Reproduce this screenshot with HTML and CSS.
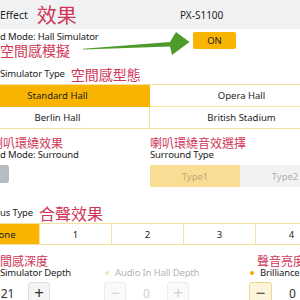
FILE: index.html
```html
<!DOCTYPE html>
<html lang="zh-Hant">
<head>
    <meta charset="UTF-8">
    <meta name="viewport" content="width=device-width, initial-scale=1.0">
    <title>Effect</title>
    <link rel="stylesheet" href="styles.css">
</head>
<body>
    <header class="topbar">
        <div class="topbar-title">
            <span>Effect</span>
            <span class="note note-xl">效果</span>
        </div>
        <span class="model">PX-S1100</span>
    </header>

    <section class="mode">
        <div class="mode-text">
            <div class="label">d Mode: Hall Simulator</div>
            <div class="note note-lg">空間感模擬</div>
        </div>
        <button class="switch switch-on">ON</button>
    </section>

    <!-- annotation arrow pointing at the ON switch -->
    <svg class="arrow" width="300" height="60" viewBox="0 0 300 60">
        <polygon points="83,48.8 170,42 176,32 189.5,42 172,55 170,46.6 83,49.6" fill="#4e9b2b"/>
    </svg>

    <section class="hall">
        <div class="heading">
            <span class="label">Simulator Type</span>
            <span class="note note-lg">空間感型態</span>
        </div>
        <div class="hall-grid">
            <button class="cell selected">Standard Hall</button>
            <button class="cell">Opera Hall</button>
            <button class="cell">Berlin Hall</button>
            <button class="cell">British Stadium</button>
        </div>
    </section>

    <section class="surround">
        <div class="surround-left">
            <div class="note note-sm surround-note">喇叭環繞效果</div>
            <div class="label">d Mode: Surround</div>
            <button class="switch switch-off"></button>
        </div>
        <div class="surround-right">
            <div class="note note-sm">喇叭環繞音效選擇</div>
            <div class="label">Surround Type</div>
            <div class="types">
                <button class="type type-active">Type1</button>
                <button class="type">Type2</button>
            </div>
        </div>
    </section>

    <section class="chorus">
        <div class="heading">
            <span class="label">us Type</span>
            <span class="note note-md">合聲效果</span>
        </div>
        <div class="chorus-row">
            <button class="chorus-cell selected">None</button>
            <button class="chorus-cell">1</button>
            <button class="chorus-cell">2</button>
            <button class="chorus-cell">3</button>
            <button class="chorus-cell">4</button>
        </div>
    </section>

    <section class="depth">
        <div class="depth-col col-sim">
            <div class="depth-note"><span class="note note-sm">空間感深度</span></div>
            <div class="label depth-label">Simulator Depth</div>
            <div class="stepper">
                <button class="step">−</button>
                <span class="value">21</span>
                <button class="step">+</button>
            </div>
        </div>
        <div class="depth-col col-audio disabled">
            <div class="depth-note"></div>
            <div class="label depth-label"><span class="dot"></span>Audio In Hall Depth</div>
            <div class="stepper">
                <button class="step">−</button>
                <span class="value">0</span>
                <button class="step">+</button>
            </div>
        </div>
        <div class="depth-col col-bright">
            <div class="depth-note"><span class="note note-sm">聲音亮度</span></div>
            <div class="label depth-label"><span class="dot"></span>Brilliance</div>
            <div class="stepper">
                <button class="step step-pressed">−</button>
                <span class="value">0</span>
                <button class="step">+</button>
            </div>
        </div>
    </section>
</body>
</html>
```

FILE: styles.css
```css
* {
    box-sizing: border-box;
}
body {
    margin: 0;
    width: 300px;
    height: 300px;
    overflow: hidden;
    position: relative;
    font-family: "Noto Sans", sans-serif;
    font-size: 9.5px;
    color: #222;
    background-color: #fff;
}
button {
    font: inherit;
    color: inherit;
    margin: 0;
    padding: 0;
    border: none;
    background: none;
}

/* red chinese annotations */
.note {
    color: #cf3658;
    font-family: "Noto Sans CJK TC", sans-serif;
    line-height: 1;
    white-space: nowrap;
}
.note-xl { font-size: 20px; }
.note-lg { font-size: 14px; }
.note-md { font-size: 16px; }
.note-sm { font-size: 12px; }

.label {
    line-height: 12px;
    letter-spacing: -0.15px;
    white-space: nowrap;
}

.topbar {
    height: 29px;
    background-color: #f1f2f4;
    display: flex;
    align-items: center;
}
.topbar-title {
    width: 180px;
    display: flex;
    align-items: center;
    gap: 9px;
    font-size: 10.5px;
}
.model {
    font-size: 10px;
}

.mode {
    display: flex;
    padding-top: 2px;
}
.mode-text {
    width: 193px;
}
.switch {
    display: block;
    width: 43px;
    height: 17px;
    border-radius: 2px;
    font-size: 9.5px;
}
.switch-on {
    margin-top: 1px;
    background-color: #f8b400;
}
.switch-off {
    margin-top: 4px;
    margin-left: -34px;
    height: 18px;
    border-radius: 3px;
    background-color: #b7bbc3;
}

.arrow {
    position: absolute;
    top: 0;
    left: 0;
    pointer-events: none;
}

.heading {
    display: flex;
    align-items: center;
    gap: 6px;
    height: 16px;
}
.hall .heading {
    margin-top: 9px;
}
.hall-grid {
    display: grid;
    grid-template-columns: repeat(2, 184px);
    margin: 2px 0 0 -34px;
    border-top: 1px solid #f3e2a2;
}
.cell {
    height: 22px;
    border-right: 1px solid #f3e2a2;
    border-bottom: 1px solid #f3e2a2;
    text-align: center;
}
.selected {
    background-color: #f8b400;
    border-color: #f8b400;
}

.surround {
    display: flex;
    margin: 8px 0 0 -33px;
}
.surround-left {
    flex-shrink: 0;
    width: 183px;
    padding-left: 33px;
}
.surround-note {
    margin-left: -9px;
}
.surround .note {
    line-height: 12px;
}
.types {
    display: flex;
    margin-top: 4px;
}
.type {
    flex-shrink: 0;
    width: 90px;
    height: 22px;
    background-color: #f2f2f2;
    color: #b0b0b0;
}
.type-active {
    background-color: #fadd94;
    color: #bca97c;
}

.chorus .heading {
    margin-top: 18px;
}
.chorus-row {
    display: flex;
    margin: 2px 0 0 -32px;
}
.chorus-cell {
    flex-shrink: 0;
    width: 72px;
    height: 22px;
    border: 1px solid #f3e2a2;
    border-left: none;
}

.depth {
    display: flex;
    margin: 10px 0 0 -35px;
}
.depth-col {
    flex-shrink: 0;
}
.col-sim { width: 139px; }
.col-audio { width: 145px; }
.col-bright { width: 145px; }
.depth-note {
    height: 12px;
    line-height: 12px;
}
.col-sim .depth-note { padding-left: 23px; }
.col-bright .depth-note { padding-left: 8px; }
.depth-label {
    display: flex;
    align-items: center;
    gap: 6px;
}
.col-sim .depth-label { padding-left: 35px; }
.dot {
    width: 4px;
    height: 4px;
    margin-left: 1px;
    border-radius: 50%;
    background-color: #f0a800;
}
.stepper {
    display: flex;
    align-items: center;
    margin-top: 3px;
}
.step {
    width: 22px;
    height: 22px;
    border: 1px solid #dcdcdc;
    border-radius: 3px;
    background-color: #f5f5f5;
    font-size: 17px;
    line-height: 18px;
    color: #333;
}
.step-pressed {
    width: 23px;
    background-color: #fdf4dc;
    border-color: #f0d68a;
}
.value {
    width: 41px;
    text-align: center;
    font-size: 12px;
    color: #333;
}
.disabled .label { color: #b4b4b4; }
.disabled .dot { background-color: #f6e6ac; }
.disabled .step {
    background-color: #fafafa;
    border-color: #ececec;
    color: #cfcfcf;
}
.disabled .value { color: #cfcfcf; }
```
